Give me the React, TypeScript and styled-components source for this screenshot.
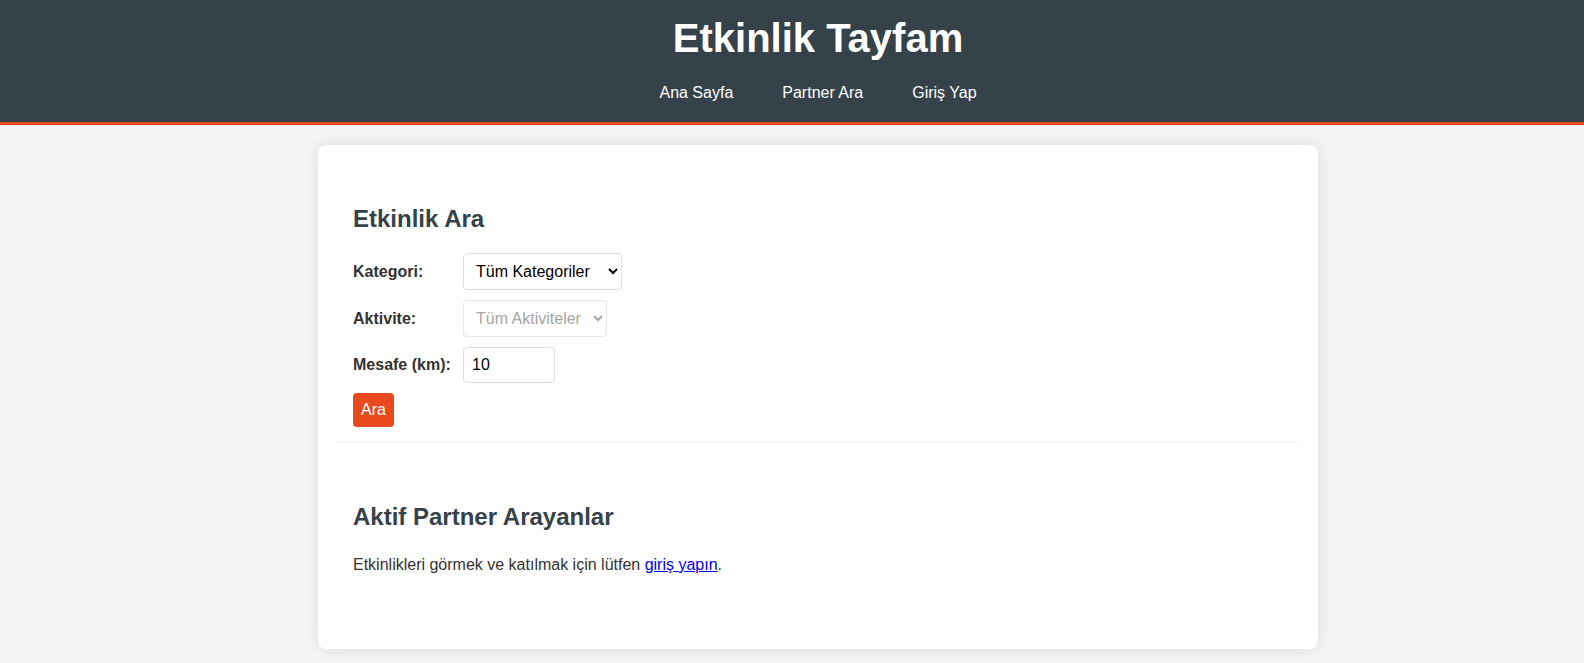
import React from "react";
import styled, { createGlobalStyle } from "styled-components";

const GlobalStyle = createGlobalStyle`
  body {
    margin: 0;
    background: #f4f4f4;
    color: #333;
    font-family: "Liberation Sans", Arial, sans-serif;
    font-size: 16px;
    line-height: 26px;
  }
`;

const Page = styled.div`
  min-height: 100vh;
`;

const Header = styled.header`
  padding: 8px 0 16px 52px;
  background: #35424a;
  color: #fff;
  border-bottom: 3px solid #e8491d;
  text-align: center;
`;

const Brand = styled.h1`
  margin: 0;
  font-size: 40px;
  line-height: 60px;
`;

const Nav = styled.nav`
  display: flex;
  justify-content: center;
  gap: 49px;
  padding-top: 12px;
`;

const NavLink = styled.a`
  color: #fff;
  text-decoration: none;
`;

const Content = styled.main`
  padding: 20px 0 0 52px;
`;

const Card = styled.div`
  box-sizing: border-box;
  max-width: 1000px;
  margin: 0 auto;
  padding: 20px;
  background: #fff;
  border-radius: 8px;
  box-shadow: 0 0 15px rgba(0, 0, 0, 0.1);
`;

const Section = styled.section<{ $divided?: boolean }>`
  margin-bottom: 20px;
  padding: 35px 15px 15px;
  border-bottom: ${(p) => (p.$divided ? "1px solid #eee" : "none")};
`;

const Title = styled.h2`
  margin: 0 0 15px;
  font-size: 24px;
  line-height: 38px;
  color: #35424a;
`;

const Form = styled.form`
  display: flex;
  flex-direction: column;
  align-items: flex-start;
  gap: 10px;
`;

const Field = styled.div`
  display: flex;
  align-items: center;
`;

const Label = styled.label`
  width: 110px;
  font-weight: bold;
`;

const Select = styled.select<{ $width: number }>`
  box-sizing: border-box;
  width: ${(p) => p.$width}px;
  padding: 8px;
  border: 1px solid #ddd;
  border-radius: 4px;
  background-color: #fff;
  font: 16px "Liberation Sans", Arial, sans-serif;
`;

const NumberInput = styled.input`
  box-sizing: border-box;
  width: 92px;
  padding: 8px;
  border: 1px solid #ddd;
  border-radius: 4px;
  font: 16px "Liberation Sans", Arial, sans-serif;
`;

const Submit = styled.button`
  padding: 8px;
  border: 0;
  border-radius: 4px;
  background: #e8491d;
  color: #fff;
  font: 16px "Liberation Sans", Arial, sans-serif;
  cursor: pointer;
`;

const Text = styled.p`
  margin: 16px 0;
`;

export default function App() {
  return (
    <Page>
      <GlobalStyle />
      <Header>
        <Brand>Etkinlik Tayfam</Brand>
        <Nav>
          <NavLink href="#">Ana Sayfa</NavLink>
          <NavLink href="#">Partner Ara</NavLink>
          <NavLink href="#">Giriş Yap</NavLink>
        </Nav>
      </Header>
      <Content>
        <Card>
          <Section $divided>
            <Title>Etkinlik Ara</Title>
            <Form>
              <Field>
                <Label htmlFor="category">Kategori:</Label>
                <Select id="category" $width={159}>
                  <option>Tüm Kategoriler</option>
                </Select>
              </Field>
              <Field>
                <Label htmlFor="activity">Aktivite:</Label>
                <Select id="activity" $width={144} disabled>
                  <option>Tüm Aktiviteler</option>
                </Select>
              </Field>
              <Field>
                <Label htmlFor="distance">Mesafe (km):</Label>
                <NumberInput id="distance" type="number" defaultValue={10} />
              </Field>
              <Submit type="button">Ara</Submit>
            </Form>
          </Section>
          <Section>
            <Title>Aktif Partner Arayanlar</Title>
            <Text>
              Etkinlikleri görmek ve katılmak için lütfen <a href="#">giriş yapın</a>.
            </Text>
          </Section>
        </Card>
      </Content>
    </Page>
  );
}
